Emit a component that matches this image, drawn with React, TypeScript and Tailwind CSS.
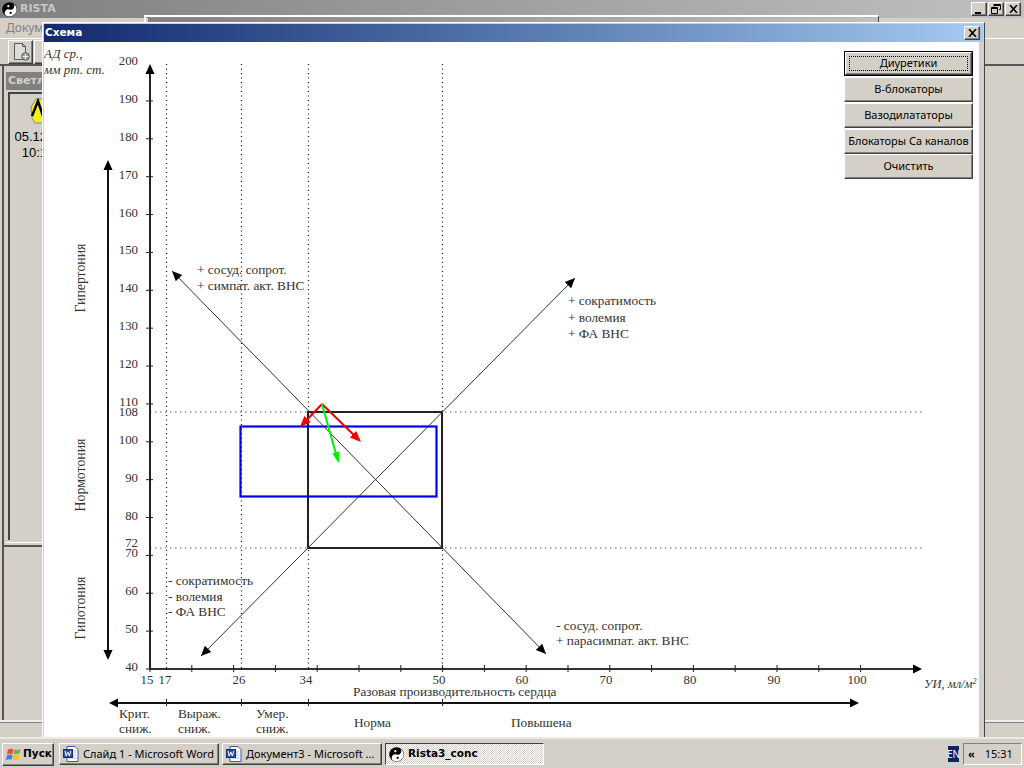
import React from "react";

const raised = "bg-[#d4d0c8] border border-t-white border-l-white border-r-[#404040] border-b-[#404040] shadow-[inset_-1px_-1px_0_#808080,inset_1px_1px_0_#d4d0c8]";

function YinYang({ size }: { size: number }) {
  return (
    <svg width={size} height={size} viewBox="0 0 32 32" className="shrink-0">
      <circle cx="16" cy="16" r="15.500" fill="#000" />
      <path d="M16 1a15 15 0 0 1 0 30a7.500 7.500 0 0 1 0-15a7.500 7.500 0 0 0 0-15z" fill="#fff" transform="rotate(20 16 16)" />
      <circle cx="13.500" cy="8.800" r="2.400" fill="#fff" />
      <circle cx="18.500" cy="23.200" r="2.400" fill="#000" />
    </svg>
  );
}

function WinFlag() {
  return (
    <svg width="15" height="15" viewBox="0 0 16 15" className="shrink-0">
      <path d="M2 2.500 Q5 .5 8 2 L7 7 Q4 6 1 7.500z" fill="#e8542a" />
      <path d="M9 2 Q12 3.500 15.500 1.500 L14.500 6.500 Q11 7.500 8 7z" fill="#6cb33f" />
      <path d="M1 8.500 Q4 7 7 8 L6 13 Q3 12 0 13.500z" fill="#3f7fd6" />
      <path d="M8 8 Q11 9 14.500 7.500 L13.500 13 Q10 14 7 13z" fill="#f6c31c" />
    </svg>
  );
}

function WordIcon() {
  return (
    <svg width="16" height="16" viewBox="0 0 16 16" className="shrink-0">
      <path d="M4 .5h8l3 3v12H4z" fill="#fff" stroke="#3a5a9c" />
      <path d="M6 6h7M6 9h7M6 12h7" stroke="#9fb4dc" />
      <rect x=".5" y="3.500" width="9" height="8" fill="#2a4fa8" stroke="#1a2f70" />
      <path d="M2 5l1.200 5 1.600-4 1.600 4L7.800 5" fill="none" stroke="#fff" />
    </svg>
  );
}

function Head({ x, y, fx, fy, len = 10, w = 4.5, fill = "#000" }: { x: number; y: number; fx: number; fy: number; len?: number; w?: number; fill?: string }) {
  const d = Math.hypot(x - fx, y - fy);
  const ux = (x - fx) / d;
  const uy = (y - fy) / d;
  const bx = x - ux * len;
  const by = y - uy * len;
  return <polygon points={`${x},${y} ${bx - uy * w},${by + ux * w} ${bx + uy * w},${by - ux * w}`} fill={fill} />;
}

function Chart() {
  const tickY = (v: number) => 669 - (v - 40) * 3.787;
  const yLabels = [190, 180, 170, 160, 150, 140, 130, 120, 110, 100, 90, 80, 70, 60, 50, 40];
  const xTicks = Array.from({ length: 18 }, (_, i) => 150 + i * 41.8);
  const xLabels: [string, number][] = [["15", 147], ["17", 165], ["26", 239], ["34", 306], ["50", 439], ["60", 522], ["70", 606], ["80", 690], ["90", 774], ["100", 857]];
  return (
    <svg width="935" height="695" viewBox="44 42 935 695" className="block font-['Liberation_Serif',serif]" fontSize="13.300" fill="#333">
      <g stroke="#111" strokeWidth="1.200" strokeDasharray="1 3.500">
        <line x1="166.500" y1="64" x2="166.500" y2="669" />
        <line x1="241.500" y1="64" x2="241.500" y2="669" />
        <line x1="308.500" y1="64" x2="308.500" y2="669" />
        <line x1="442.500" y1="64" x2="442.500" y2="669" />
      </g>
      <g stroke="#666" strokeWidth="1.200" strokeDasharray="1.500 3.500">
        <line x1="150" y1="412" x2="922" y2="412" />
        <line x1="150" y1="548" x2="922" y2="548" />
      </g>

      <rect x="308" y="412" width="134" height="136" fill="none" stroke="#222" strokeWidth="2" />

      <line x1="172" y1="271" x2="546" y2="654" stroke="#333" strokeWidth="1" />
      <Head x={172} y={271} fx={546} fy={654} />
      <Head x={546} y={654} fx={172} fy={271} />
      <line x1="201" y1="656" x2="575" y2="278" stroke="#333" strokeWidth="1" />
      <Head x={201} y={656} fx={575} fy={278} />
      <Head x={575} y={278} fx={201} fy={656} />

      <rect x="240.500" y="426.500" width="196" height="70" fill="none" stroke="#0000f0" strokeWidth="2.200" />

      <line x1="322" y1="404" x2="302" y2="425" stroke="#f00000" strokeWidth="2" />
      <Head x={300} y={427} fx={322} fy={404} fill="#f00000" len={11} w={4.500} />
      <line x1="322" y1="404" x2="359" y2="440" stroke="#f00000" strokeWidth="2" />
      <Head x={361} y={442} fx={322} fy={404} fill="#f00000" len={11} w={4.500} />
      <line x1="322" y1="404" x2="338" y2="461" stroke="#00f000" strokeWidth="2" />
      <Head x={339} y={463} fx={322} fy={404} fill="#00f000" len={11} w={3.800} />

      {/* axes */}
      <line x1="150" y1="70" x2="150" y2="670" stroke="#222" strokeWidth="2" />
      <Head x={150} y={64} fx={150} fy={669} len={10} w={4.500} />
      <line x1="149" y1="669" x2="915" y2="669" stroke="#333" strokeWidth="2" />
      <Head x={922} y={669} fx={150} fy={669} len={9} w={4.500} />
      {yLabels.map((v) => (
        <line key={v} x1="146" y1={tickY(v)} x2="153" y2={tickY(v)} stroke="#222" strokeWidth="1" />
      ))}
      {xTicks.map((x) => (
        <line key={x} x1={x} y1="665" x2={x} y2="672" stroke="#222" strokeWidth="1" />
      ))}

      <g fontSize="12.800">
        <text x="138" y="65" textAnchor="end">200</text>
        {yLabels.map((v) => (
          <text key={v} x="138" y={tickY(v) + 2} textAnchor="end">{v}</text>
        ))}
        <text x="138" y="415.500" textAnchor="end">108</text>
        <text x="138" y="547" textAnchor="end">72</text>
        {xLabels.map(([t, x]) => (
          <text key={t} x={x} y="684" textAnchor="middle">{t}</text>
        ))}
      </g>

      {/* left arrow */}
      <line x1="108" y1="168" x2="108" y2="652" stroke="#111" strokeWidth="2" />
      <Head x={108} y={160} fx={108} fy={660} len={10} w={4.500} />
      <Head x={108} y={660} fx={108} fy={160} len={10} w={4.500} />
      <g fontSize="13.800">
        <text transform="translate(85 278) rotate(-90)" textAnchor="middle">Гипертония</text>
        <text transform="translate(85 475) rotate(-90)" textAnchor="middle">Нормотония</text>
        <text transform="translate(85 608) rotate(-90)" textAnchor="middle">Гипотония</text>
      </g>

      {/* bottom arrow */}
      <line x1="116" y1="703" x2="852" y2="703" stroke="#111" strokeWidth="2" />
      <Head x={109} y={703} fx={859} fy={703} len={9} w={4.500} />
      <Head x={859} y={703} fx={109} fy={703} len={9} w={4.500} />
      {[166.5, 241.5, 308.5, 442.5].map((x) => (
        <line key={x} x1={x} y1="699" x2={x} y2="706" stroke="#222" strokeWidth="1" />
      ))}

      <g fontStyle="italic">
        <text x="44" y="58" fontSize="13">АД ср.,</text>
        <text x="44" y="74" fontSize="13">мм рт. ст.</text>
        <text x="924" y="688" fontSize="12.500">УИ, мл/м<tspan fontSize="8" dy="-4">2</tspan></text>
      </g>

      <text x="197" y="274">+ сосуд. сопрот.</text>
      <text x="197" y="290">+ симпат. акт. ВНС</text>
      <text x="568" y="305">+ сократимость</text>
      <text x="568" y="322">+ волемия</text>
      <text x="568" y="338">+ ФА ВНС</text>
      <text x="168" y="585">- сократимость</text>
      <text x="168" y="601">- волемия</text>
      <text x="168" y="616">- ФА ВНС</text>
      <text x="556" y="630">- сосуд. сопрот.</text>
      <text x="556" y="645">+ парасимпат. акт. ВНС</text>
      <text x="353" y="696">Разовая производительность сердца</text>
      <text x="119" y="718">Крит.</text>
      <text x="119" y="733">сниж.</text>
      <text x="178" y="718">Выраж.</text>
      <text x="178" y="733">сниж.</text>
      <text x="256" y="718">Умер.</text>
      <text x="256" y="733">сниж.</text>
      <text x="354" y="727">Норма</text>
      <text x="511" y="727">Повышена</text>
    </svg>
  );
}

function CaptionBtn({ children }: { children: React.ReactNode }) {
  return <div className={`${raised} w-4 h-[14px] flex items-center justify-center`}>{children}</div>;
}

function DialogButton({ label, focused }: { label: string; focused?: boolean }) {
  if (focused) {
    return (
      <div className="h-[25px] w-[129px] border border-black">
        <div className={`${raised} h-full flex items-center justify-center p-[3px]`}>
          <div className="w-full h-full border border-dotted border-black flex items-center justify-center">{label}</div>
        </div>
      </div>
    );
  }
  return <div className={`${raised} h-[25px] w-[129px] flex items-center justify-center`}>{label}</div>;
}

function TaskButton({ label, width, active, icon }: { label: string; width: string; active?: boolean; icon: React.ReactNode }) {
  return (
    <div
      className={`${width} h-[22px] flex items-center gap-[3px] pl-[3px] shrink-0 ${
        active
          ? "border border-t-[#404040] border-l-[#404040] border-r-white border-b-white font-bold font-['DejaVu_Sans',sans-serif] text-[10.5px] bg-[repeating-conic-gradient(#fff_0_25%,#d4d0c8_0_50%)] bg-[length:2px_2px]"
          : raised
      }`}
    >
      {icon}
      <span className="truncate pl-[1px]">{label}</span>
    </div>
  );
}

export default function App() {
  return (
    <div className="relative w-[1024px] h-[768px] overflow-hidden bg-[#d4d0c8] flex flex-col text-[11px] text-black font-['Noto_Sans',sans-serif]">
      {/* main title bar */}
      <div className="h-[18px] shrink-0 bg-gradient-to-r from-[#808080] to-[#c0c0c0] flex items-center pl-[2px] pr-[3px]">
        <YinYang size={15} />
        <span className="ml-[3px] font-bold text-[11px] text-[#c8c8c8] font-['DejaVu_Sans',sans-serif]">RISTA</span>
        <div className="ml-auto flex">
          <CaptionBtn>
            <div className="w-[6px] h-[2px] bg-black mt-[7px] -ml-[2px]" />
          </CaptionBtn>
          <div className="ml-[1px]">
            <CaptionBtn>
              <svg width="10" height="10" viewBox="0 0 10 10">
                <path d="M3 .5h6.500v5H8M3 .5v2M3 1.500h6" fill="none" stroke="#000" />
                <path d="M.5 3.500h6v6h-6zM.5 4.500h6" fill="none" stroke="#000" />
              </svg>
            </CaptionBtn>
          </div>
          <div className="ml-[1px]">
            <CaptionBtn>
              <svg width="9" height="8" viewBox="0 0 9 8">
                <path d="M1 0l7 8M8 0L1 8" stroke="#000" strokeWidth="1.600" />
              </svg>
            </CaptionBtn>
          </div>
        </div>
      </div>

      {/* menu */}
      <div className="h-[20px] shrink-0 flex items-center pl-[6px] text-[12px] text-[#808080]">Документ</div>

      {/* toolbar */}
      <div className="h-[28px] shrink-0 border-t border-t-white border-b-2 border-b-[#555] flex items-start pt-[1px] pl-[8px] gap-[1px]">
        <div className={`${raised} w-[25px] h-[24px] flex items-center justify-center`}>
          <svg width="18" height="18" viewBox="0 0 18 18">
            <path d="M2.500.5h8l3 3v13h-11z" fill="#dcdcdc" stroke="#5a5a5a" />
            <path d="M10.500.5v3h3" fill="none" stroke="#5a5a5a" />
            <circle cx="13.500" cy="13.500" r="3.800" fill="#9c9c9c" stroke="#5a5a5a" />
            <path d="M13.500 10.500v6M10.500 13.500h6" stroke="#eee" />
          </svg>
        </div>
        <div className={`${raised} w-[25px] h-[24px]`} />
      </div>

      {/* workspace */}
      <div className="flex-1 flex flex-col min-h-0">
        <div className="flex-1 flex flex-col min-h-0 ml-[2px] border-l-2 border-l-[#555]">
          <div className="h-[481px] shrink-0 w-[41px] border-b-2 border-b-[#555] relative pt-[6px] pl-[1px]">
            <div className="h-[18px] w-[200px] bg-[#808080] text-[#d4d0c8] font-bold text-[11px] pl-[2px] flex items-center ml-[1px] font-['DejaVu_Sans',sans-serif]">Светлана</div>
            <div className="mt-[2px] ml-[3px] w-[200px] h-[448px] border-l-2 border-t-2 border-[#444] flex flex-col pt-[4px] font-['Liberation_Sans',sans-serif]">
              <div className="w-[64px] ml-[5px] flex flex-col items-center">
                <svg width="26" height="26" viewBox="0 0 26 26" className="self-start ml-[12px]">
                  <path d="M4 9l5-8h10l3 8-1 12-3 4H8l-3-5z" fill="#f6ee1c" stroke="#888" />
                  <path d="M5 18L11 3l5 15" fill="none" stroke="#000" strokeWidth="2.500" />
                </svg>
                <div className="mt-[5px] text-[13px] leading-[16px] whitespace-nowrap">05.12.2005</div>
                <div className="text-[13px] leading-[16px] whitespace-nowrap">10:15:00</div>
              </div>
            </div>
            <div className="absolute left-[2px] right-0 bottom-[2px] h-[1px] bg-white" />
          </div>
        </div>
        <div className="h-[17px] shrink-0 border-t-2 border-t-[#f0eeea] shadow-[inset_0_1px_0_#808080]" />
      </div>

      {/* taskbar */}
      <div className="h-[31px] shrink-0 border-t-2 border-t-[#ece9e2] flex items-center pl-[2px] pr-[2px] pt-[1px]">
        <div className={`${raised} w-[52px] h-[23px] flex items-center gap-[2px] pl-[3px] font-bold text-[10.5px] shrink-0 font-['DejaVu_Sans',sans-serif]`}>
          <WinFlag />
          <span>Пуск</span>
        </div>
        <div className="ml-[5px] flex gap-[3px]">
          <TaskButton label="Слайд 1 - Microsoft Word" width="w-[160px]" icon={<WordIcon />} />
          <TaskButton label="Документ3 - Microsoft ..." width="w-[160px]" icon={<WordIcon />} />
          <TaskButton label="Rista3_conc" width="w-[159px]" active icon={<YinYang size={15} />} />
        </div>
        <div className="ml-auto w-[11px] h-[16px] bg-[#0a246a] text-white text-[10px] overflow-hidden flex items-center justify-center">EN</div>
        <div className="ml-[4px] w-[59px] h-[22px] border border-t-[#808080] border-l-[#808080] border-r-white border-b-white flex items-center pl-[4px] gap-[10px] text-[11px]">
          <span className="font-bold">«</span>
          <span>15:31</span>
        </div>
      </div>

      {/* window behind the dialog */}
      <div className="absolute left-[144px] top-[15px] w-[735px] h-[8px] border-t-2 border-l-2 border-t-white border-l-white border-r border-r-[#444] pl-[2px] pt-[1px]">
        <div className="h-[4px] bg-gradient-to-r from-[#808080] to-[#c0c0c0]" />
      </div>

      {/* dialog */}
      <div className="absolute left-[42px] top-[22px] w-[943px] h-[715px] bg-[#d4d0c8] border-l border-l-white border-t border-t-white border-r border-r-[#444] p-[1px] pb-0 flex flex-col">
        <div className="h-[18px] shrink-0 bg-gradient-to-r from-[#14286e] to-[#a6caf0] flex items-center pl-[1px] pr-[3px]">
          <span className="font-bold text-white text-[10.5px] font-['DejaVu_Sans',sans-serif]">Схема</span>
          <div className={`${raised} ml-auto w-4 h-[14px] flex items-center justify-center`}>
            <svg width="9" height="8" viewBox="0 0 9 8">
              <path d="M1 0l7 8M8 0L1 8" stroke="#000" strokeWidth="1.600" />
            </svg>
          </div>
        </div>
        <div className="relative w-[935px] flex-1 bg-white overflow-hidden">
          <Chart />
          <div className="absolute left-[800px] top-[9px] flex flex-col gap-[1px]">
            <DialogButton label="Диуретики" focused />
            <DialogButton label="В-блокаторы" />
            <DialogButton label="Вазодилататоры" />
            <DialogButton label="Блокаторы Са каналов" />
            <div className="-mt-[1px]">
              <DialogButton label="Очистить" />
            </div>
          </div>
        </div>
      </div>
    </div>
  );
}
